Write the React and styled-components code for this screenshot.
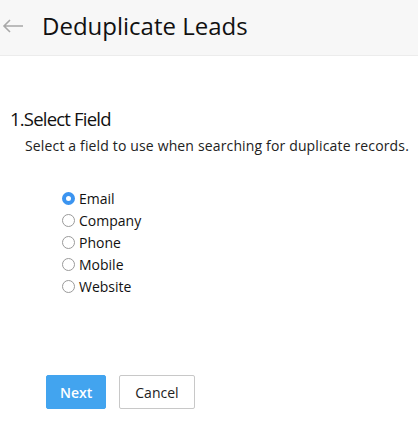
import React, { useState } from 'react';
import styled, { createGlobalStyle } from 'styled-components';

const GlobalStyle = createGlobalStyle`
  body {
    margin: 0;
    background: #fff;
    font-family: 'Open Sans', Lato, sans-serif;
    color: #222;
  }
`;

const Page = styled.div`
  width: 418px;
  height: 425px;
  display: flex;
  flex-direction: column;
`;

const Header = styled.header`
  height: 56px;
  padding-bottom: 5px;
  display: flex;
  align-items: center;
  background: #f7f7f7;
  border-bottom: 1px solid #ececec;
  box-sizing: border-box;
`;

const BackButton = styled.button`
  border: none;
  background: none;
  padding: 0;
  margin: 2px 18px 0 2px;
  display: flex;
  align-items: center;
  cursor: pointer;
`;

const Title = styled.h1`
  margin: 0;
  font-size: 24px;
  font-weight: 400;
  color: #111;
`;

const Body = styled.main`
  padding: 51px 0 0 10px;
  display: flex;
  flex-direction: column;
`;

const StepTitle = styled.h2`
  margin: 0;
  font-size: 18.5px;
  line-height: 24px;
  letter-spacing: -0.8px;
  font-weight: 400;
  color: #111;
`;

const Hint = styled.p`
  margin: 6px 0 0 15px;
  font-size: 14px;
  line-height: 18px;
  letter-spacing: 0.15px;
  color: #222;
`;

const Options = styled.div`
  margin: 32px 0 0 52px;
  display: flex;
  flex-direction: column;
`;

const Option = styled.label`
  height: 22px;
  display: flex;
  align-items: center;
  font-size: 14px;
  color: #111;
  cursor: pointer;
`;

const Radio = styled.span`
  width: 13px;
  height: 13px;
  box-sizing: border-box;
  border-radius: 50%;
  margin-right: 4px;
  border: ${p => (p.checked ? '4px solid #3b94f0' : '1px solid #9a9a9a')};
  background: #fff;
`;

const Actions = styled.div`
  margin: 78px 0 0 36px;
  display: flex;
  gap: 13px;
`;

const Button = styled.button`
  height: 34px;
  padding: 0 ${p => (p.primary ? '13px' : '15px')};
  font-family: inherit;
  font-size: 14px;
  border-radius: 2px;
  cursor: pointer;
  border: 1px solid ${p => (p.primary ? '#42a4ef' : '#c8c8c8')};
  background: ${p => (p.primary ? '#42a4ef' : '#fff')};
  color: ${p => (p.primary ? '#fff' : '#222')};
  font-weight: ${p => (p.primary ? 600 : 400)};
`;

const fields = ['Email', 'Company', 'Phone', 'Mobile', 'Website'];

export default function App() {
  const [field, setField] = useState('Email');

  return (
    <Page>
      <GlobalStyle />
      <Header>
        <BackButton aria-label="Back">
          <svg width="22" height="14" viewBox="0 0 22 14" fill="none" stroke="#a8a8a8" strokeWidth="1.6">
            <path d="M21 7H2M8 1L2 7l6 6" />
          </svg>
        </BackButton>
        <Title>Deduplicate Leads</Title>
      </Header>
      <Body>
        <StepTitle>1.Select Field</StepTitle>
        <Hint>Select a field to use when searching for duplicate records.</Hint>
        <Options>
          {fields.map(f => (
            <Option key={f} onClick={() => setField(f)}>
              <Radio checked={field === f} />
              {f}
            </Option>
          ))}
        </Options>
        <Actions>
          <Button primary>Next</Button>
          <Button>Cancel</Button>
        </Actions>
      </Body>
    </Page>
  );
}
